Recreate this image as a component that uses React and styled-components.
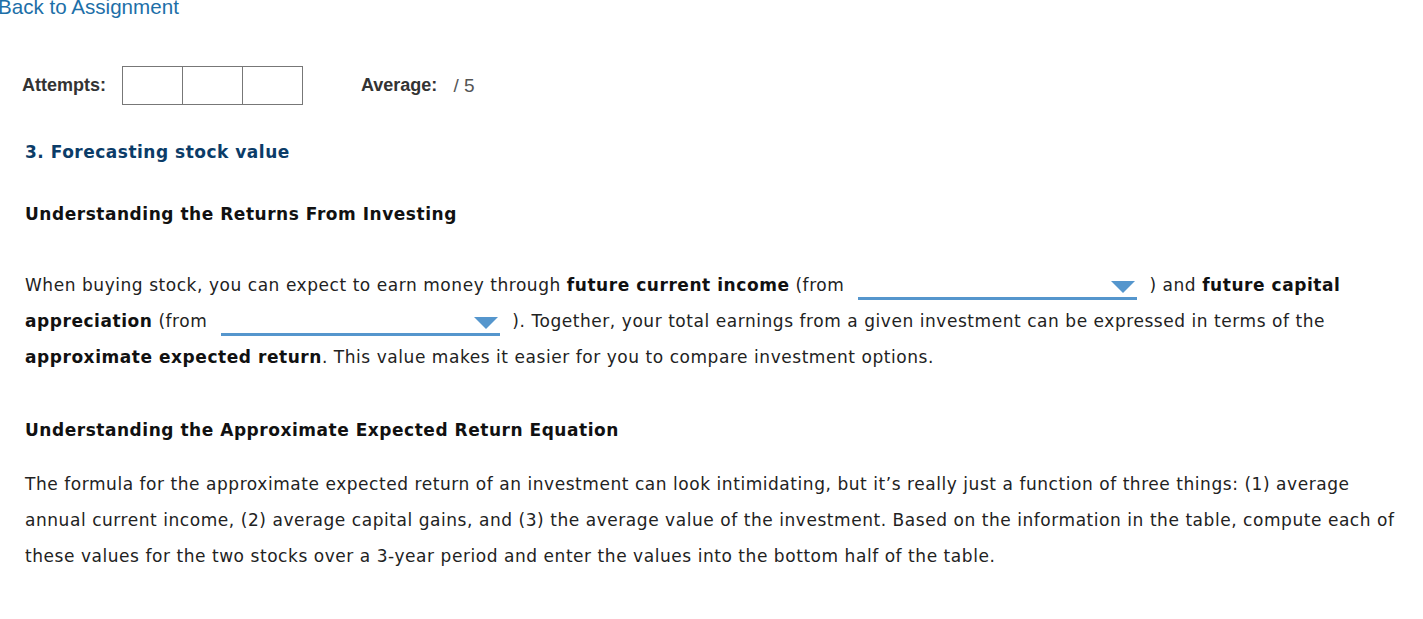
import styled, { createGlobalStyle } from "styled-components"

const Global = createGlobalStyle`
    body {
        margin: 0;
        background: #ffffff;
        font-family: "DejaVu Sans", Verdana, sans-serif;
    }
`

const Page = styled.div`
    width: 1423px;
    height: 619px;
    overflow: hidden;
`

const BackLink = styled.a`
    display: block;
    margin: -5px 0 0 -2px;
    font-family: "Liberation Sans", Arial, sans-serif;
    font-size: 20.6px;
    line-height: 24px;
    color: #1d6fa8;
    text-decoration: none;
`

const Scores = styled.div`
    display: flex;
    align-items: center;
    margin: 47px 0 0 22px;
    font-family: "Liberation Sans", Arial, sans-serif;
    font-size: 18px;
    color: #333333;
`

const Label = styled.span`
    font-weight: bold;
    margin-right: ${p => p.gap}px;
`

const Boxes = styled.div`
    display: flex;
    margin-right: 58px;
`

const Box = styled.div`
    width: 59px;
    height: 37px;
    border: 1px solid #777777;
    margin-left: ${p => (p.first ? 0 : -1)}px;
`

const Value = styled.span`
    color: #555555;
    font-size: 19px;
`

const Content = styled.div`
    padding: 0 20px 0 25px;
`

const Title = styled.h2`
    margin: 36px 0 0;
    font-size: 17px;
    letter-spacing: 0.5px;
    line-height: 22px;
    font-weight: bold;
    color: #0b3c68;
`

const Heading = styled.h3`
    margin: ${p => p.top}px 0 0;
    font-size: 17px;
    letter-spacing: 0.53px;
    line-height: 22px;
    font-weight: bold;
    color: #111111;
`

const Para = styled.p`
    margin: ${p => p.top}px 0 0;
    font-size: 17px;
    letter-spacing: 0.55px;
    line-height: 36px;
    color: #222222;

    b {
        color: #111111;
    }
`

const Select = styled.span`
    display: inline-flex;
    justify-content: flex-end;
    align-items: center;
    width: ${p => p.width}px;
    height: 22px;
    margin: 0 12px 0 14px;
    padding-right: 2px;
    box-sizing: border-box;
    border-bottom: 3px solid #5596cd;
    vertical-align: -2px;
`

function Caret() {
    return (
        <svg width="24" height="12" viewBox="0 0 24 12">
            <polygon points="0,0 24,0 12,12" fill="#5596cd" />
        </svg>
    )
}

export default function App() {
    return (
        <Page>
            <Global />
            <BackLink href="#">Back to Assignment</BackLink>
            <Scores>
                <Label gap={16}>Attempts:</Label>
                <Boxes>
                    <Box first />
                    <Box />
                    <Box />
                </Boxes>
                <Label gap={16}>Average:</Label>
                <Value>/ 5</Value>
            </Scores>
            <Content>
                <Title>3. Forecasting stock value</Title>
                <Heading top={40}>Understanding the Returns From Investing</Heading>
                <Para top={42}>
                    When buying stock, you can expect to earn money through <b>future current income</b> (from
                    <Select width={279}><Caret /></Select>) and <b>future capital appreciation</b> (from
                    <Select width={279}><Caret /></Select>). Together, your total earnings from a given investment can be expressed in terms of the <b>approximate expected return</b>. This value makes it easier for you to compare investment options.
                </Para>
                <Heading top={44}>Understanding the Approximate Expected Return Equation</Heading>
                <Para top={25}>
                    The formula for the approximate expected return of an investment can look intimidating, but it’s really just a function of three things: (1) average annual current income, (2) average capital gains, and (3) the average value of the investment. Based on the information in the table, compute each of these values for the two stocks over a 3-year period and enter the values into the bottom half of the table.
                </Para>
            </Content>
        </Page>
    )
}
